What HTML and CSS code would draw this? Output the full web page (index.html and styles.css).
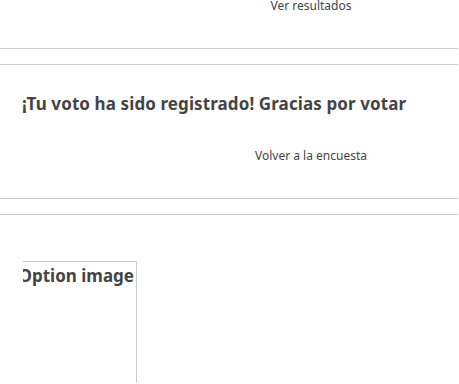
FILE: index.html
```html
<!DOCTYPE html>
<html lang="es">
<head>
    <meta charset="UTF-8">
    <meta name="viewport" content="width=device-width, initial-scale=1.0">
    <title>Encuesta</title>
    <link rel="stylesheet" href="styles.css">
</head>
<body>
    <div class="poll poll-top">
        <div class="poll-links">
            <a href="#" class="poll-link">Ver resultados</a>
        </div>
    </div>

    <div class="poll poll-done">
        <h2 class="poll-title">¡Tu voto ha sido registrado! Gracias por votar</h2>
        <div class="poll-links">
            <a href="#" class="poll-link">Volver a la encuesta</a>
        </div>
    </div>

    <div class="poll poll-options">
        <div class="option">
            <div class="option-image">Option image</div>
        </div>
    </div>
</body>
</html>
```

FILE: styles.css
```css
body{
    margin: 0;
    font-family: "Noto Sans", "Open Sans", sans-serif;
    color: #444;
    background-color: #fff;
}

.poll{
    width: 458px;
    box-sizing: border-box;
}

.poll-top{
    height: 50px;
    border-bottom: 1px solid #ccc;
}

.poll-done{
    margin-top: 15px;
    height: 135px;
    border-top: 1px solid #ccc;
    border-bottom: 1px solid #ccc;
}

.poll-options{
    margin-top: 15px;
    height: 169px;
    border-top: 1px solid #ccc;
    padding-top: 46px;
    padding-left: 23px;
}

.poll-links{
    display: flex;
    justify-content: center;
    padding-left: 163px;
    width: 296px;
}

.poll-link{
    font-size: 12px;
    line-height: 14px;
    color: #444;
    text-decoration: none;
}

.poll-top .poll-links{
    margin-top: -1px;
}

.poll-title{
    margin: 28px 0 0 22px;
    font-size: 17px;
    line-height: 22px;
    font-weight: bold;
    letter-spacing: 0.1px;
    color: #444;
}

.poll-done .poll-links{
    margin-top: 34px;
}

.option{
    width: 114px;
    height: 122px;
    box-sizing: border-box;
    border-top: 1px solid #ccc;
    border-right: 1px solid #ccc;
    overflow: hidden;
}

.option-image{
    display: flex;
    justify-content: flex-end;
    white-space: nowrap;
    padding-top: 3px;
    padding-right: 2px;
    font-size: 17px;
    font-weight: bold;
    line-height: 22px;
}
```
